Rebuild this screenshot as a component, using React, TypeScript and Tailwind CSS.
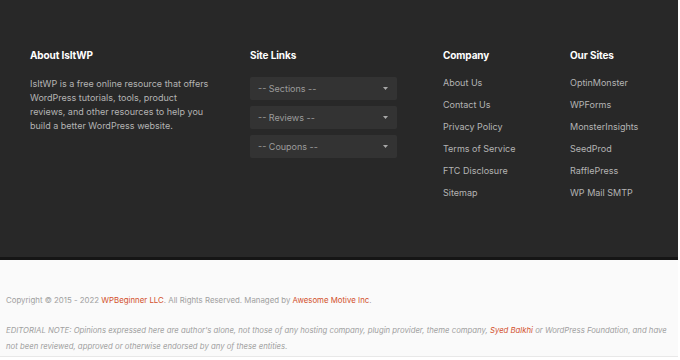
const company = ['About Us', 'Contact Us', 'Privacy Policy', 'Terms of Service', 'FTC Disclosure', 'Sitemap'];
const sites = ['OptinMonster', 'WPForms', 'MonsterInsights', 'SeedProd', 'RafflePress', 'WP Mail SMTP'];
const selects = ['-- Sections --', '-- Reviews --', '-- Coupons --'];

const Caret = () => (
    <svg width="5" height="3" viewBox="0 0 5 3" className="fill-[#a8a8a8]">
        <path d="M0 0h5L2.5 3z" />
    </svg>
);

const App = () => {
    return (
        <div className="w-[680px] h-[360px] bg-white font-['Inter',sans-serif] overflow-hidden">
            <div className="w-[678px] h-[260px] bg-[#282828] border-b-[3px] border-[#151515] flex pt-[48px]">
                <div className="w-[220px] ml-[30px]">
                    <h3 className="text-white text-[10px] font-bold leading-[14px] tracking-[-0.1px]">About IsItWP</h3>
                    <p className="w-[183px] mt-[15px] text-[#b4b4b4] text-[9px] leading-[14px]">
                        IsItWP is a free online resource that offers WordPress tutorials, tools, product reviews, and other resources to help you build a better WordPress website.
                    </p>
                </div>
                <div className="w-[193px]">
                    <h3 className="text-white text-[10px] font-bold leading-[14px] tracking-[-0.1px]">Site Links</h3>
                    <div className="mt-[15px] flex flex-col gap-[6px]">
                        {selects.map((s) => (
                            <div key={s} className="w-[147px] h-[23px] bg-[#333333] rounded-[2px] flex items-center justify-between pl-[8px] pr-[9px]">
                                <span className="text-[#9c9c9c] text-[9px]">{s}</span>
                                <Caret />
                            </div>
                        ))}
                    </div>
                </div>
                <div className="w-[127px]">
                    <h3 className="text-white text-[10px] font-bold leading-[14px] tracking-[-0.1px]">Company</h3>
                    <ul className="mt-[14px] flex flex-col gap-[8px]">
                        {company.map((c) => (
                            <li key={c} className="text-[#b4b4b4] text-[9px] leading-[14px]">{c}</li>
                        ))}
                    </ul>
                </div>
                <div>
                    <h3 className="text-white text-[10px] font-bold leading-[14px] tracking-[-0.1px]">Our Sites</h3>
                    <ul className="mt-[14px] flex flex-col gap-[8px]">
                        {sites.map((c) => (
                            <li key={c} className="text-[#b4b4b4] text-[9px] leading-[14px]">{c}</li>
                        ))}
                    </ul>
                </div>
            </div>
            <div className="w-[678px] h-[97px] bg-[#fafafa] border-b border-[#e8e8e8] pl-[6px] pt-[34px] text-[7.85px] text-[#a0a0a0]">
                <p className="leading-[12px]">
                    Copyright © 2015 - 2022 <span className="text-[#d2502c]">WPBeginner LLC</span>. All Rights Reserved. Managed by <span className="text-[#d2502c]">Awesome Motive Inc</span>.
                </p>
                <p className="mt-[16px] italic text-[7.75px] leading-[16px]">
                    EDITORIAL NOTE: Opinions expressed here are author's alone, not those of any hosting company, plugin provider, theme company, <span className="text-[#d2502c]">Syed Balkhi</span> or WordPress Foundation, and have not been reviewed, approved or otherwise endorsed by any of these entities.
                </p>
            </div>
        </div>
    );
};

export default App;
